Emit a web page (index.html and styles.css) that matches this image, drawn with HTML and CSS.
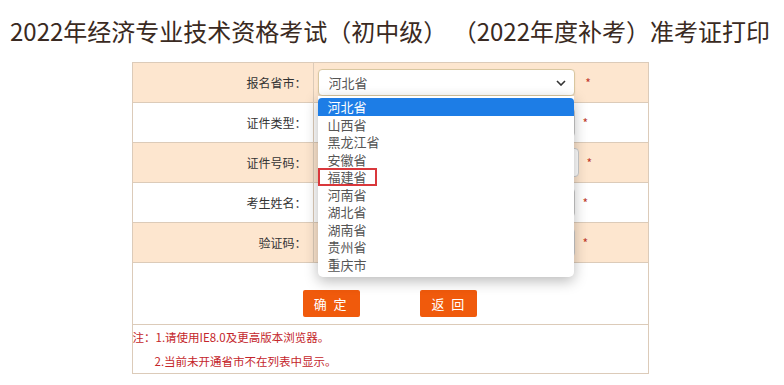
FILE: index.html
```html
<!DOCTYPE html>
<html lang="zh-CN">
<head>
  <meta charset="UTF-8">
  <meta name="viewport" content="width=device-width, initial-scale=1.0">
  <title>准考证打印</title>
  <link rel="stylesheet" href="styles.css">
</head>
<body>
  <h1 class="page-title">2022年经济专业技术资格考试（初中级） （2022年度补考）准考证打印</h1>

  <!-- query form -->
  <table class="form-table">
    <tr class="row-tint">
      <td class="label">报名省市：</td>
      <td class="field">
        <div class="select-wrap">
          <select class="select">
            <option>河北省</option>
          </select>
          <svg class="chevron" width="10" height="6" viewBox="0 0 10 6">
            <path d="M1 1l4 4 4-4" fill="none" stroke="#333" stroke-width="1.6"/>
          </svg>
          <!-- opened option list -->
          <ul class="options">
            <li class="active">河北省</li>
            <li>山西省</li>
            <li>黑龙江省</li>
            <li>安徽省</li>
            <li><span class="marked">福建省</span></li>
            <li>河南省</li>
            <li>湖北省</li>
            <li>湖南省</li>
            <li>贵州省</li>
            <li>重庆市</li>
          </ul>
        </div>
        <span class="star">*</span>
      </td>
    </tr>
    <tr>
      <td class="label">证件类型：</td>
      <td class="field"><input class="text-input" type="text"><span class="star">*</span></td>
    </tr>
    <tr class="row-tint">
      <td class="label">证件号码：</td>
      <td class="field"><input class="text-input wide" type="text"><span class="star">*</span></td>
    </tr>
    <tr>
      <td class="label">考生姓名：</td>
      <td class="field"><input class="text-input" type="text"><span class="star">*</span></td>
    </tr>
    <tr class="row-tint">
      <td class="label">验证码：</td>
      <td class="field"><input class="text-input" type="text"><span class="star">*</span></td>
    </tr>
    <tr class="row-actions">
      <td class="actions" colspan="2">
        <button class="btn">确 定</button>
        <button class="btn">返 回</button>
      </td>
    </tr>
    <tr class="row-notes">
      <td class="notes" colspan="2">
        <p>注：1.请使用IE8.0及更高版本浏览器。</p>
        <p class="indent">2.当前未开通省市不在列表中显示。</p>
      </td>
    </tr>
  </table>
</body>
</html>
```

FILE: styles.css
```css
body {
  margin: 0;
  padding-right: 4px;
  background: #fff;
  font-family: "Noto Sans CJK SC", "Noto Sans", sans-serif;
  color: #333;
}

.page-title {
  margin: 13px 0 13px;
  font-size: 24px;
  font-weight: normal;
  line-height: 36px;
  text-align: center;
  color: #3a2a22;
  white-space: nowrap;
}

.form-table {
  width: 517px;
  margin: 0 auto;
  border-collapse: collapse;
  border: 1px solid #dccbb9;
  font-size: 12px;
}

.form-table td {
  border-top: 1px solid #dccbb9;
  border-bottom: 1px solid #dccbb9;
  padding: 0;
}

.form-table tr {
  height: 40px;
}

.row-tint td {
  background: #fde6cf;
}

.label {
  width: 174px;
  padding-right: 6px !important;
  text-align: right;
  color: #333;
  border-right: 1px solid #dccbb9;
}

.field {
  padding-left: 4px !important;
  white-space: nowrap;
}

.select-wrap {
  position: relative;
  display: inline-block;
  vertical-align: middle;
}

.select {
  appearance: none;
  -webkit-appearance: none;
  width: 257px;
  height: 27px;
  padding: 0 10px;
  border: 1px solid #d9c7a0;
  border-radius: 4px;
  background: #fff;
  font-family: inherit;
  font-size: 13px;
  color: #555;
  box-shadow: 0 1px 2px rgba(0, 0, 0, 0.08);
}

.chevron {
  position: absolute;
  right: 9px;
  top: 11px;
}

.options {
  position: absolute;
  left: 0;
  top: 27px;
  width: 256px;
  margin: 0;
  padding: 2px 0 4px;
  list-style: none;
  background: #fff;
  border-radius: 0 0 5px 5px;
  box-shadow: 0 4px 14px rgba(0, 0, 0, 0.28);
  z-index: 5;
}

.options li {
  height: 17.5px;
  line-height: 17.5px;
  padding-left: 10px;
  font-size: 13px;
  color: #555;
}

.options li.active {
  background: #1d7de6;
  color: #fff;
  border-radius: 4px 4px 0 0;
}

.options .marked {
  display: inline-block;
  margin-left: -10px;
  padding: 0 8px;
  line-height: 14px;
  border: 2px solid #d9383c;
  vertical-align: top;
}

.text-input {
  width: 251px;
  height: 25px;
  border: 1px solid #ccc;
  border-radius: 4px;
  vertical-align: middle;
}

.text-input.wide {
  width: 255px;
}

.star {
  margin-left: 8px;
  color: #c0392b;
  font-size: 12px;
  vertical-align: middle;
}

.row-actions {
  height: 61px;
}

.actions {
  height: 28px;
  padding: 27px 0 6px !important;
  text-align: center;
  background: #fff;
  vertical-align: top;
}

.btn {
  width: 57px;
  height: 27px;
  margin: 0 29px;
  border: none;
  border-radius: 2px;
  background: #f05a0c;
  color: #fff;
  font-family: inherit;
  font-size: 13px;
  letter-spacing: 2px;
  cursor: pointer;
}

.row-notes {
  height: 49px;
}

.notes {
  height: 48px;
  padding: 0 !important;
  color: #c4262b;
  font-size: 11.5px;
  vertical-align: top;
}

.notes p {
  margin: 0;
  line-height: 24px;
}

.notes .indent {
  padding-left: 22px;
}
```
